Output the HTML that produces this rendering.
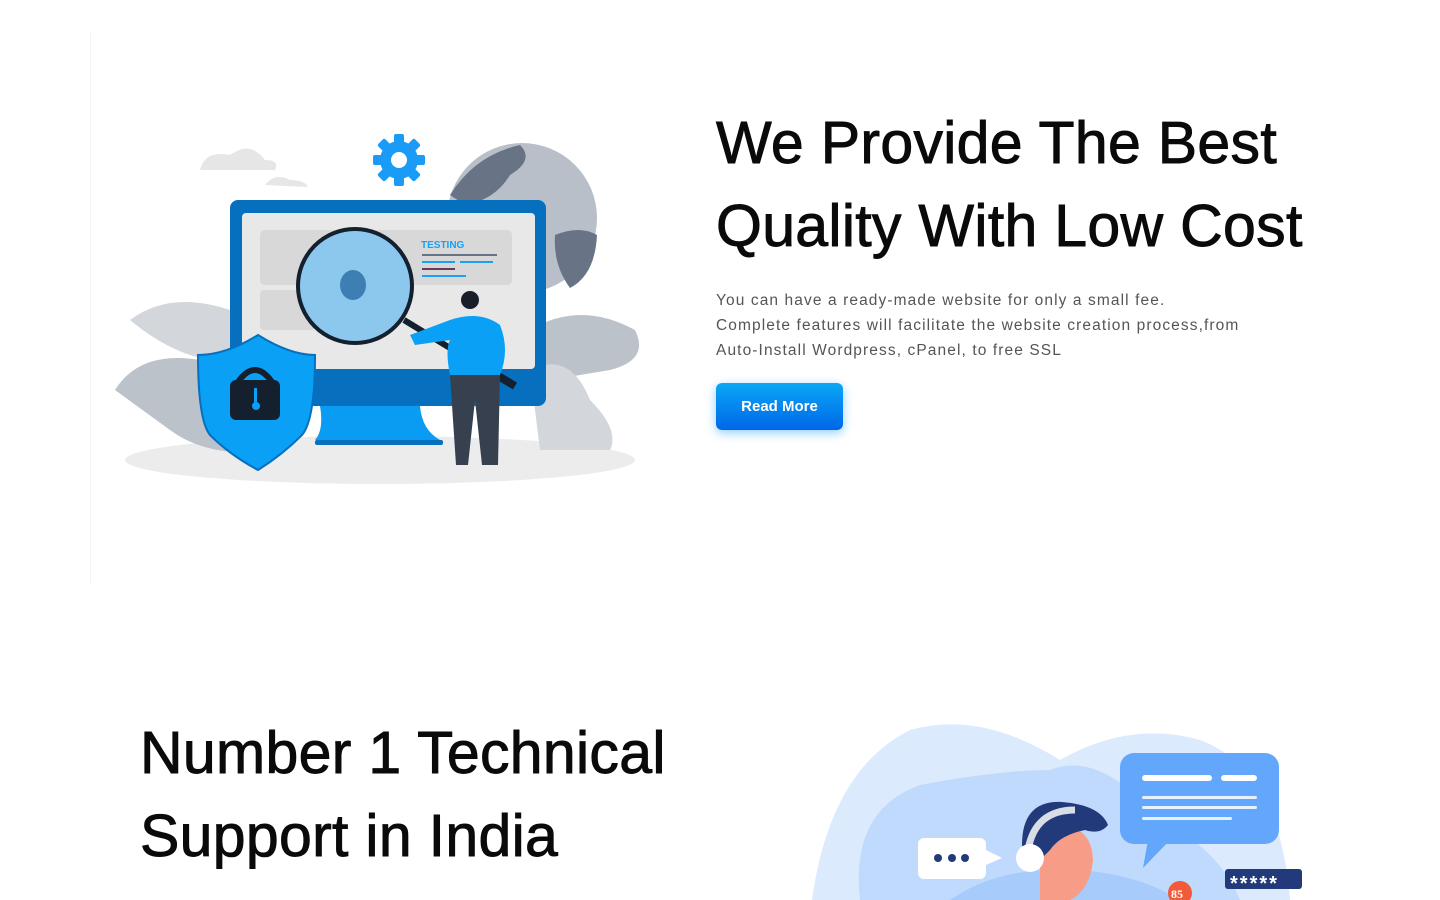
<!DOCTYPE html>
<html><head><meta charset="utf-8"><style>
*{margin:0;padding:0;box-sizing:border-box}
body{width:1440px;height:900px;overflow:hidden;background:#fff;font-family:"Liberation Sans",sans-serif;position:relative}
.vl{position:absolute;left:90px;top:32px;width:1px;height:552px;background:#f3f3f3}
h1{position:absolute;font-weight:normal;font-size:59px;line-height:83px;color:#0a0a0a;letter-spacing:0.3px;-webkit-text-stroke:0.9px #0a0a0a}
.p{position:absolute;left:716px;top:288px;font-size:15.5px;line-height:25px;color:#555;letter-spacing:1.1px}
.btn{position:absolute;left:716px;top:383px;width:127px;height:47px;border-radius:6px;background:linear-gradient(#0aa8f5,#0066e8);color:#fff;font-weight:bold;font-size:15px;line-height:47px;text-align:center;box-shadow:0 3px 10px rgba(0,150,255,.45)}
svg{position:absolute}
</style></head><body>
<div class="vl"></div>
<svg style="left:110px;top:130px" width="540" height="360" viewBox="0 0 540 360">
<ellipse cx="270" cy="330" rx="255" ry="24" fill="#ececec"/>
<path d="M5 260 Q30 220 90 230 Q60 190 110 200 Q140 210 160 250 L170 320 Q100 330 60 300 Z" fill="#bcc2ca"/>
<path d="M20 190 Q60 160 120 180 L140 230 Q80 240 20 190Z" fill="#d3d6da"/>
<path d="M420 200 Q470 170 525 200 Q540 230 500 240 L440 250Z" fill="#bcc2ca"/>
<path d="M420 240 Q460 220 480 270 Q510 300 500 320 L430 320Z" fill="#d3d6da"/>
<path d="M90 40 Q95 20 120 25 Q140 10 155 30 Q170 30 165 40 Z" fill="#e6e6e6"/>
<path d="M155 55 Q165 42 180 50 Q195 50 198 57Z" fill="#e6e6e6"/>
<circle cx="412" cy="88" r="75" fill="#b8bfc8"/>
<path d="M340 65 Q365 25 410 15 Q425 30 400 45 Q385 70 355 75Z" fill="#687486"/>
<path d="M445 105 Q470 95 487 105 Q485 145 460 158 Q443 135 445 105Z" fill="#687486"/>
<g transform="translate(289,30)" fill="#1a9bf5">
<circle r="19"/>
<rect x="-5" y="-26" width="10" height="52" rx="2"/>
<rect x="-5" y="-26" width="10" height="52" rx="2" transform="rotate(45)"/>
<rect x="-5" y="-26" width="10" height="52" rx="2" transform="rotate(90)"/>
<rect x="-5" y="-26" width="10" height="52" rx="2" transform="rotate(135)"/>
<circle r="8" fill="#fff"/></g>
<rect x="120" y="70" width="316" height="206" rx="8" fill="#0670bf"/>
<rect x="132" y="83" width="293" height="156" rx="4" fill="#e8e8e8"/>
<rect x="150" y="100" width="252" height="55" rx="5" fill="#d8d8d8"/>
<rect x="150" y="160" width="55" height="40" rx="4" fill="#d8d8d8"/>
<text x="311" y="118" font-size="10" font-weight="bold" fill="#1aa0f5" font-family="Liberation Sans">TESTING</text>
<rect x="312" y="124" width="75" height="2" fill="#687486"/><rect x="312" y="131" width="33" height="2" fill="#1aa0f5"/><rect x="350" y="131" width="33" height="2" fill="#1aa0f5"/><rect x="312" y="138" width="33" height="2" fill="#6b3a5a"/><rect x="312" y="145" width="44" height="2" fill="#1aa0f5"/>
<path d="M210 276 L310 276 Q312 300 330 310 L205 310 Q214 300 210 276Z" fill="#0a9bf2"/>
<rect x="205" y="310" width="128" height="5" rx="2" fill="#0670bf"/>
<circle cx="245" cy="156" r="57" fill="#8cc8ee" stroke="#14202e" stroke-width="4"/>
<ellipse cx="243" cy="155" rx="13" ry="15" fill="#3d7fb3"/>
<path d="M294 190 L340 218" stroke="#14202e" stroke-width="6"/>
<path d="M375 238 L405 256" stroke="#14202e" stroke-width="8"/>
<path d="M340 190 Q370 180 390 195 Q400 220 390 245 L340 245 Q335 220 340 210 L305 215 L300 205Z" fill="#0aa0f5"/>
<circle cx="360" cy="170" r="9" fill="#1a1d2a"/>
<path d="M340 245 L390 245 L388 335 L372 335 L365 270 L358 335 L346 335Z" fill="#36404f"/>
<path d="M148 205 Q180 225 205 225 Q205 290 192 305 Q172 325 148 340 Q120 325 100 305 Q88 290 88 225 Q116 225 148 205Z" fill="#0aa0f5" stroke="#0670bf" stroke-width="2"/>
<rect x="120" y="250" width="50" height="40" rx="6" fill="#14202e"/>
<path d="M128 252 Q145 228 162 252" stroke="#14202e" stroke-width="6" fill="none"/>
<rect x="144" y="258" width="3" height="16" fill="#0aa0f5"/><circle cx="146" cy="276" r="4" fill="#0aa0f5"/>
</svg>
<h1 style="left:716px;top:102px">We Provide The Best<br>Quality With Low Cost</h1>
<div class="p">You can have a ready-made website for only a small fee.<br>Complete features will facilitate the website creation process,from<br>Auto-Install Wordpress, cPanel, to free SSL</div>
<div class="btn">Read More</div>
<h1 style="left:140px;top:712px">Number 1 Technical<br>Support in India</h1>
<svg style="left:800px;top:710px" width="520" height="190" viewBox="0 0 520 190">
<path d="M12 190 Q30 60 110 20 Q180 0 260 50 Q330 10 400 30 Q480 60 490 190Z" fill="#dceafd"/>
<path d="M60 190 Q50 100 120 75 Q200 60 250 60 Q300 40 360 110 Q420 140 440 190Z" fill="#bfdafc"/>
<path d="M150 190 Q200 155 280 160 Q340 165 380 190Z" fill="#a7cbfa"/>
<rect x="320" y="43" width="159" height="91" rx="14" fill="#62a7fb"/>
<path d="M348 130 L343 158 L370 130Z" fill="#62a7fb"/>
<rect x="342" y="65" width="70" height="6" rx="3" fill="#fff"/><rect x="421" y="65" width="36" height="6" rx="3" fill="#fff"/>
<rect x="342" y="86" width="115" height="3" rx="1.5" fill="#e8f1ff"/><rect x="342" y="96" width="115" height="3" rx="1.5" fill="#e8f1ff"/><rect x="342" y="107" width="90" height="3" rx="1.5" fill="#e8f1ff"/>
<rect x="118" y="128" width="68" height="41" rx="6" fill="#fff"/><path d="M186 140 L202 148 L186 155Z" fill="#fff"/>
<circle cx="138" cy="148" r="4" fill="#233a7a"/><circle cx="152" cy="148" r="4" fill="#233a7a"/><circle cx="165" cy="148" r="4" fill="#233a7a"/>
<path d="M240 190 L240 135 Q245 110 265 115 Q292 120 293 150 Q290 180 270 190Z" fill="#f79c86"/>
<path d="M222 135 Q222 90 262 92 Q300 95 308 115 Q300 125 285 120 Q260 125 250 140 L240 150 Q225 150 222 135Z" fill="#233a7a"/>
<path d="M228 140 Q235 100 275 100" stroke="#d9dde6" stroke-width="7" fill="none"/>
<circle cx="230" cy="148" r="14" fill="#fff"/>
<rect x="425" y="159" width="77" height="20" rx="3" fill="#233a7a"/>
<text x="430" y="180" font-size="20" font-weight="bold" fill="#fff" font-family="Liberation Sans" letter-spacing="2">*****</text>
<circle cx="380" cy="183" r="12" fill="#f25b3a"/><text x="371" y="188" font-size="12" font-weight="bold" fill="#fff" font-family="Liberation Serif">85</text>
</svg>
</body></html>
